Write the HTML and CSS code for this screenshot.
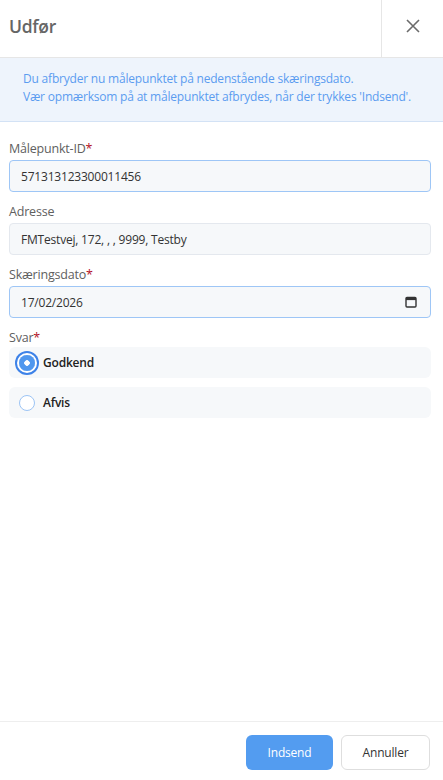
FILE: index.html
```html
<!DOCTYPE html>
<html lang="da">
<head>
<meta charset="utf-8">
<title>Udfør</title>
<link rel="stylesheet" href="styles.css">
</head>
<body>
<div class="panel">
  <header class="head">
    <h1 class="title">Udfør</h1>
    <button class="close" aria-label="Luk">
      <svg width="14" height="14" viewBox="0 0 14 14"><path d="M1 1 L13 13 M13 1 L1 13" stroke="#6b6b6b" stroke-width="1.6" fill="none"/></svg>
    </button>
  </header>
  <div class="info">
    <p>Du afbryder nu målepunktet på nedenstående skæringsdato.</p>
    <p>Vær opmærksom på at målepunktet afbrydes, når der trykkes 'Indsend'.</p>
  </div>
  <main class="form">
    <div class="field">
      <label class="label">Målepunkt-ID<span class="req">*</span></label>
      <div class="input focus">571313123300011456</div>
    </div>
    <div class="field">
      <label class="label">Adresse</label>
      <div class="input">FMTestvej, 172, , , 9999, Testby</div>
    </div>
    <div class="field">
      <label class="label">Skæringsdato<span class="req">*</span></label>
      <div class="input focus date">
        <span>17/02/2026</span>
        <svg width="12" height="12" viewBox="0 0 12 12"><rect x="1" y="1.5" width="10" height="9.5" rx="1" fill="none" stroke="#333" stroke-width="1.4"/><rect x="1" y="1.5" width="10" height="2.6" fill="#333"/></svg>
      </div>
    </div>
    <div class="field">
      <label class="label">Svar<span class="req">*</span></label>
      <div class="options">
        <div class="option"><span class="radio on"></span><span class="opt-text">Godkend</span></div>
        <div class="option"><span class="radio"></span><span class="opt-text">Afvis</span></div>
      </div>
    </div>
  </main>
  <footer class="foot">
    <button class="btn primary">Indsend</button>
    <button class="btn secondary">Annuller</button>
  </footer>
</div>
</body>
</html>
```
FILE: styles.css
```css
* { box-sizing: border-box; }
html, body { margin: 0; padding: 0; height: 100%; }
body {
  font-family: "Segoe UI", "Open Sans", "Noto Sans", sans-serif;
  background: #fff;
  color: #333;
}
.panel {
  height: 780px;
  display: flex;
  flex-direction: column;
}
.head {
  height: 58px;
  display: flex;
  border-bottom: 1px solid #e6e6e6;
}
.title {
  flex: 1;
  margin: 0;
  padding-left: 9px;
  font-size: 17.5px;
  font-weight: 600;
  letter-spacing: -0.3px;
  color: #666;
  line-height: 52px;
}
.close {
  width: 62px;
  border: none;
  border-left: 1px solid #e6e6e6;
  background: transparent;
  display: flex;
  align-items: center;
  justify-content: center;
  padding: 0 0 6px 0;
}
.info {
  background: #eef4fc;
  border-bottom: 1px solid #d3e2f5;
  padding: 12px 23px 13px;
  color: #5b9cf0;
  font-size: 12px;
  letter-spacing: -0.2px;
  line-height: 18px;
  height: 64px;
}
.info p { margin: 0; white-space: nowrap; }
.form {
  flex: 1;
  padding: 18px 12px 0 9px;
  display: flex;
  flex-direction: column;
  gap: 11px;
}
.field { display: flex; flex-direction: column; }
.label {
  font-size: 12.5px;
  letter-spacing: -0.2px;
  color: #606060;
  line-height: 18px;
  margin-bottom: 2px;
}
.req { color: #b3121f; }
.input {
  height: 32px;
  background: #f6f8fa;
  border: 1px solid #e4e8ee;
  border-radius: 4px;
  padding: 0 11px;
  font-size: 12px;
  letter-spacing: -0.2px;
  color: #333;
  display: flex;
  align-items: center;
}
.input.focus { border-color: #9ec6f6; }
.date { justify-content: space-between; padding-right: 13px; }
.options { display: flex; flex-direction: column; gap: 9px; margin-top: -2px; }
.option {
  height: 31px;
  background: #f6f8fa;
  border-radius: 6px;
  display: flex;
  align-items: center;
  padding-left: 10px;
  gap: 8px;
}
.radio {
  width: 16px; height: 16px;
  border-radius: 50%;
  border: 1px solid #9cc4f5;
  background: #fff;
  flex: none;
}
.radio.on {
  border: none;
  box-shadow: 0 0 0 2px #fff, 0 0 0 4px #3d82e8;
  background: radial-gradient(circle, #fff 0 2.5px, #5097ee 3px);
}
.opt-text { font-size: 12px; letter-spacing: -0.2px; font-weight: 600; color: #222; }
.foot {
  height: 59px;
  border-top: 1px solid #eeeeee;
  display: flex;
  justify-content: flex-end;
  align-items: center;
  gap: 8px;
  padding: 2px 13px 0 0;
}
.btn {
  height: 35px;
  border-radius: 6px;
  font-family: inherit;
  font-size: 12px;
  letter-spacing: -0.2px;
}
.primary {
  width: 87px;
  background: #539cf0;
  color: #fff;
  border: none;
}
.secondary {
  width: 89px;
  background: #fff;
  color: #333;
  border: 1px solid #dedede;
}
```
